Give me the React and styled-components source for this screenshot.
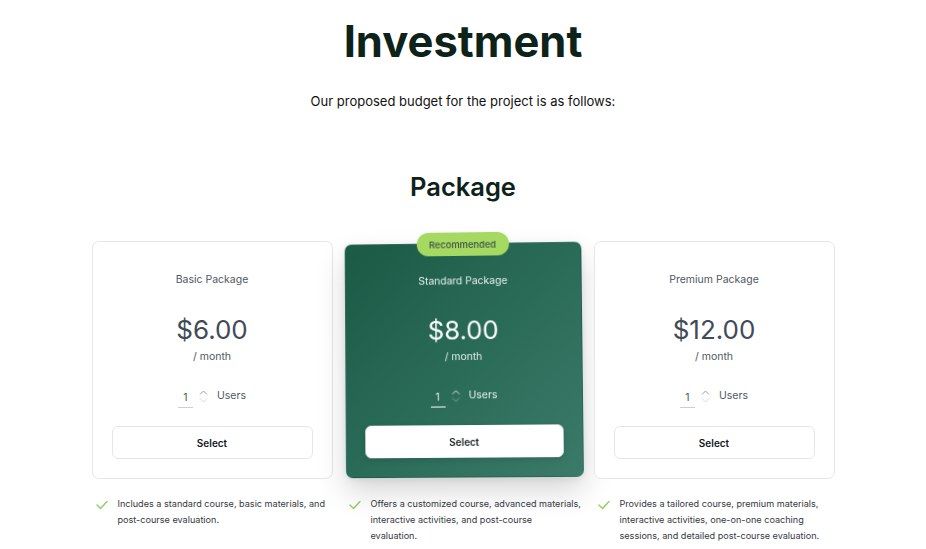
import styled, { createGlobalStyle } from "styled-components";

const GlobalStyle = createGlobalStyle`
  html, body {
    margin: 0;
    padding: 0;
    background: #ffffff;
    font-family: Inter, "Noto Sans", sans-serif;
    -webkit-font-smoothing: antialiased;
  }
`;

const Page = styled.div`
  width: 926px;
  height: 549px;
  overflow: hidden;
  display: flex;
  flex-direction: column;
  align-items: center;
`;

const Title = styled.h1`
  margin: 14px 0 0;
  font-size: 43.5px;
  line-height: 54px;
  font-weight: 700;
  color: #0d2219;
`;

const Subtitle = styled.p`
  margin: 24px 0 0;
  font-size: 13px;
  line-height: 18px;
  color: #111;
`;

const Heading = styled.h2`
  margin: 60px 0 0;
  font-size: 25.5px;
  line-height: 34px;
  font-weight: 600;
  color: #0d2219;
`;

const Grid = styled.div`
  margin-top: 37px;
  width: 743px;
  display: grid;
  grid-template-columns: repeat(3, 1fr);
  column-gap: 10px;
`;

const Column = styled.div`
  display: flex;
  flex-direction: column;
`;

const Card = styled.div`
  position: relative;
  height: 238px;
  box-sizing: border-box;
  padding: 30px 19px 19px;
  border-radius: 7px;
  display: flex;
  flex-direction: column;
  align-items: center;
  border: 1px solid ${({ $featured }) => ($featured ? "transparent" : "#e3e7ea")};
  background: ${({ $featured }) =>
    $featured ? "linear-gradient(135deg, #1b5a45 0%, #2a6b57 50%, #3b7a69 100%)" : "#ffffff"};
  color: ${({ $featured }) => ($featured ? "#ffffff" : "#4b5560")};
  box-shadow: ${({ $featured }) =>
    $featured ? "0 14px 30px rgba(0, 0, 0, 0.16), 0 2px 8px rgba(0,0,0,0.08)" : "none"};
  transform: ${({ $featured }) =>
    $featured
      ? "perspective(900px) rotateX(1.2deg) rotateY(-1.6deg) rotateZ(-0.5deg) scale(0.985)"
      : "none"};
`;

const Badge = styled.div`
  position: absolute;
  top: -12px;
  left: 50%;
  transform: translateX(-50%);
  height: 24px;
  padding: 0 13px;
  border-radius: 12px;
  background: #a6d962;
  color: #3c5246;
  font-size: 9.5px;
  font-weight: 500;
  display: flex;
  align-items: center;
  white-space: nowrap;
`;

const Name = styled.div`
  font-size: 10.5px;
  line-height: 16px;
  color: ${({ $featured }) => ($featured ? "#e9f1ee" : "#4e5862")};
`;

const Price = styled.div`
  margin-top: 26px;
  font-size: 26px;
  line-height: 32px;
  font-weight: 400;
  color: ${({ $featured }) => ($featured ? "#ffffff" : "#414b56")};
`;

const Per = styled.div`
  margin-top: 4px;
  font-size: 10.5px;
  line-height: 14px;
  color: ${({ $featured }) => ($featured ? "#e3ece8" : "#4e5862")};
`;

const UsersRow = styled.div`
  margin-top: 21px;
  display: flex;
  align-items: center;
  gap: 6px;
  font-size: 10.5px;
  color: ${({ $featured }) => ($featured ? "#e9f1ee" : "#4e5862")};
`;

const Qty = styled.span`
  width: 15px;
  text-align: center;
  padding-bottom: 3px;
  margin-top: 6px;
  border-bottom: 1.5px solid ${({ $featured }) => ($featured ? "#ffffff" : "#c9cfdd")};
`;

const Spinner = styled.span`
  display: flex;
  flex-direction: column;
  gap: 3px;
  margin-right: 3px;
`;

const Label = styled.span`
  margin-bottom: 2px;
`;

const Button = styled.button`
  margin-top: auto;
  width: 100%;
  height: 33px;
  border-radius: 6px;
  font-family: inherit;
  font-size: 10px;
  font-weight: 600;
  color: #14181c;
  background: #ffffff;
  border: 1px solid ${({ $featured }) => ($featured ? "#ffffff" : "#e3e7ea")};
  box-shadow: ${({ $featured }) => ($featured ? "0 2px 6px rgba(0,0,0,0.12)" : "none")};
`;

const Feature = styled.div`
  margin-top: 17px;
  display: flex;
  align-items: flex-start;
  gap: 10px;
  padding: 0 ${({ $featured }) => ($featured ? "2px 0 6px" : "5px 0 4px")};
  font-size: 9.1px;
  line-height: 16px;
  color: #33393e;
`;

const FeatureText = styled.span`
  flex: 1;
  white-space: pre-line;
`;

const CheckIcon = styled.svg`
  flex: none;
  margin-top: 4px;
`;

const plans = [
  {
    name: "Basic Package",
    price: "$6.00",
    text: "Includes a standard course, basic materials, and post-course evaluation.",
  },
  {
    name: "Standard Package",
    price: "$8.00",
    featured: true,
    text: "Offers a customized course, advanced materials, interactive activities, and post-course\nevaluation.",
  },
  {
    name: "Premium Package",
    price: "$12.00",
    text: "Provides a tailored course, premium materials, interactive activities, one-on-one coaching sessions, and detailed post-course evaluation.",
  },
];

const Arrow = ({ up, color }) => (
  <svg width="9" height="5" viewBox="0 0 9 5">
    <polyline
      points={up ? "1,4.5 4.5,1 8,4.5" : "1,0.5 4.5,4 8,0.5"}
      fill="none"
      stroke={color}
      strokeWidth="1"
    />
  </svg>
);

export default function App() {
  return (
    <Page>
      <GlobalStyle />
      <Title>Investment</Title>
      <Subtitle>Our proposed budget for the project is as follows:</Subtitle>
      <Heading>Package</Heading>
      <Grid>
        {plans.map((p) => (
          <Column key={p.name}>
            <Card $featured={p.featured}>
              {p.featured && <Badge>Recommended</Badge>}
              <Name $featured={p.featured}>{p.name}</Name>
              <Price $featured={p.featured}>{p.price}</Price>
              <Per $featured={p.featured}>/ month</Per>
              <UsersRow $featured={p.featured}>
                <Qty $featured={p.featured}>1</Qty>
                <Spinner>
                  <Arrow up color={p.featured ? "#dfe9e5" : "#9aa2aa"} />
                  <Arrow color={p.featured ? "#7fa597" : "#d5dadf"} />
                </Spinner>
                <Label>Users</Label>
              </UsersRow>
              <Button $featured={p.featured}>Select</Button>
            </Card>
            <Feature $featured={p.featured}>
              <CheckIcon width="12" height="10" viewBox="0 0 12 10">
                <polyline
                  points="1,5 4.5,8.5 11,1.5"
                  fill="none"
                  stroke="#8fd05c"
                  strokeWidth="1.4"
                  strokeLinecap="round"
                  strokeLinejoin="round"
                />
              </CheckIcon>
              <FeatureText>{p.text}</FeatureText>
            </Feature>
          </Column>
        ))}
      </Grid>
    </Page>
  );
}
